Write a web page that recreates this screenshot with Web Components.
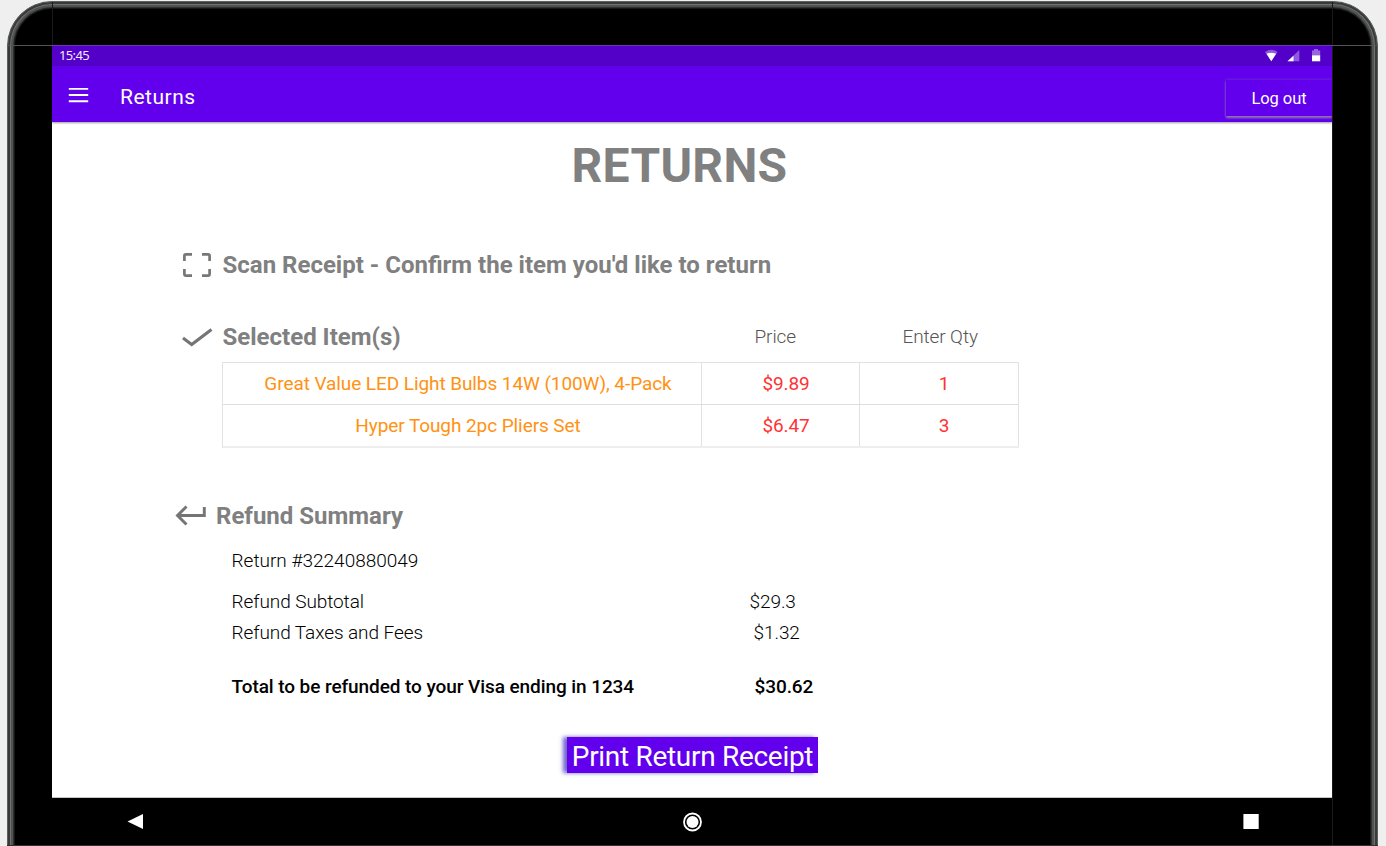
<!DOCTYPE html>
<html lang="en">
<head>
<meta charset="utf-8">
<title>Returns</title>
<style>
html,body{margin:0;height:100%;overflow:hidden;background:#efefef}
body{font-family:Roboto,"Liberation Sans",sans-serif}
</style>
</head>
<body>
<tablet-frame>
  <status-bar time="15:45"></status-bar>
  <app-bar heading="Returns"><span slot="action">Log out</span></app-bar>
  <returns-page></returns-page>
  <nav-bar></nav-bar>
</tablet-frame>
<script>
function define(name, html) {
  const t = document.createElement('template');
  t.innerHTML = html;
  customElements.define(name, class extends HTMLElement {
    connectedCallback() {
      if (this.shadowRoot) return;
      const root = this.attachShadow({mode: 'open'});
      root.append(t.content.cloneNode(true));
      root.querySelectorAll('[data-attr]').forEach(e => { e.textContent = this.getAttribute(e.dataset.attr) || ''; });
    }
  });
}

define('tablet-frame', `
<style>
:host{display:block;box-sizing:border-box;position:relative;width:1371px;height:846px;margin-left:7px;padding:45px 46px 0 45px;overflow:hidden;isolation:isolate}
.body{position:absolute;z-index:-1;left:0;right:0;top:1px;height:900px;box-sizing:border-box;border-radius:45px;background:#000;border:1px solid #5e6060;
 box-shadow:inset 0 0 0 2px #383a39,inset 0 0 0 3px #707271,inset 0 0 0 5px #505151,inset 0 0 0 6px #303030,inset 0 0 0 7px #161616}
.h{position:absolute;left:0;right:0;height:1px}
.v{position:absolute;top:2px;bottom:0;width:1px;background:#1a1a1a;z-index:-1}
.screen{width:1280px;height:801px;display:flex;flex-direction:column;background:#fff;overflow:hidden}
</style>
<div class="body"></div>
<div class="v" style="left:45px"></div><div class="v" style="right:45px"></div>
<div class="h" style="top:45px;background:#555;z-index:-1"></div>
<div class="screen"><slot></slot></div>
<div class="h" style="top:845px;background:#303030"></div>`);

define('status-bar', `
<style>
:host{display:flex;align-items:center;justify-content:space-between;box-sizing:border-box;height:21px;padding:0 8px 2px 7px;background:#5300c8;color:#f3ebff;font-size:13px;border-top:1px solid #6a35b8}
span{letter-spacing:-.65px;font-family:"Noto Sans",sans-serif}
svg{display:block}
</style>
<span data-attr="time"></span>
<svg width="64" height="19" viewBox="1260 46 64 19">
 <path d="M1265 52q6.300-4.500 12.600 0l-6.300 9.200z" fill="#fff" opacity=".35"/>
 <path d="M1266.500 53.800q4.800-2.300 9.600 0l-4.800 7.400z" fill="#fff"/>
 <path d="M1287.500 61.300L1299.300 50v11.300z" fill="#fff" opacity=".35"/>
 <path d="M1287.500 61.300L1293.500 55.800v5.500z" fill="#fff"/>
 <path d="M1312 50.500h2v-1.500h4v1.500h2.200v5H1312z" fill="#fff" opacity=".4"/>
 <path d="M1312 55.300h8.200v6H1312z" fill="#fff"/>
</svg>`);

define('app-bar', `
<style>
:host{display:flex;align-items:center;box-sizing:border-box;height:56px;padding-left:16px;background:#6200ee;color:#fff;box-shadow:0 1px 2px #0006;z-index:1;flex:none}
svg{display:block;margin-top:2px}
h1{margin:5px 0 0 31px;font:400 21px/28px Roboto,sans-serif;letter-spacing:.5px}
button{box-sizing:border-box;margin:8px 0 0 auto;width:106px;height:36px;padding:0;border:0;background:#6200ee;color:#fff;font:400 16.500px/37px Roboto,sans-serif;letter-spacing:-.05px;box-shadow:0 2px 2px #8c79aa,0 0 3px #8070a899}
</style>
<svg width="21" height="16" viewBox="0 0 21 16"><path d="M.8 1.900h19.400M.8 8h19.400M.8 14.200h19.400" stroke="#fff" stroke-width="1.900"/></svg>
<h1 data-attr="heading"></h1>
<button><slot name="action"></slot></button>`);

define('section-title', `
<style>
:host{display:flex;align-items:center;height:40px;color:#808080;font-size:24px;font-weight:700}
.icon{flex:none;width:32px;height:32px;margin:-1px 9.500px 0 0}
::slotted(svg){display:block}
</style>
<span class="icon"><slot name="icon"></slot></span><slot></slot>`);

define('item-row', `
<style>
:host{display:grid;grid-template-columns:479px 158px 159px;height:42px;box-sizing:border-box;border-bottom:1px solid #dedede;font-size:19px}
span{display:flex;align-items:center;justify-content:center;border-right:1px solid #e2e2e2;box-sizing:border-box;color:#ff3333;letter-spacing:-.1px}
.name{color:#ff9212;padding-left:12px;letter-spacing:-.08px}
.num{padding-left:11px}
.num:last-child{padding-left:10px}
</style>
<span class="name" data-attr="name"></span><span class="num" data-attr="price"></span><span class="num" data-attr="qty"></span>`);

define('summary-line', `
<style>
:host{display:flex;align-items:center;height:30px;font-size:19px;font-weight:300;color:#000;white-space:nowrap}
.l{width:var(--label,519px)}
</style>
<span class="l" data-attr="label"></span><span data-attr="value"></span>`);

define('returns-page', `
<style>
:host{display:flex;flex-direction:column;height:675px;flex:none;background:#fff;border-bottom:1px solid #c4c4c4}
h2{margin:14px 0 0;padding-right:25px;text-align:center;font:700 48px/60px Roboto,sans-serif;letter-spacing:.3px;color:#808080}
.scan{margin:49px 0 0 129px}
.selected{display:flex;margin:32px 0 0 129px}
.selected section-title{width:573.500px}
.head{font-size:19px;font-weight:300;color:#555;line-height:40px;letter-spacing:-.1px}
.qty{margin-left:106.500px}
.table{display:flex;flex-direction:column;box-sizing:border-box;width:797px;margin:5px 0 0 170px;border:1px solid #e2e2e2;border-width:1px 0 0 1px}
.table item-row:last-child{height:43px;border-bottom:2px solid #eee}
.refund{margin:48px 0 0 122.500px}
.lines{margin:9px 0 0 179.500px}
.total{font-weight:500;--label:523px;margin-top:24px;letter-spacing:-.08px}
button{display:block;margin:36px 0 0 515px;width:251px;height:36px;padding:0;border:0;background:#6200ee;color:#fff;font:400 28px/39px Roboto,sans-serif;letter-spacing:-.3px;white-space:nowrap;box-shadow:-4px 0 4px #4b3fc0cc}
</style>
<h2>RETURNS</h2>
<section-title class="scan"><svg slot="icon" width="32" height="32" viewBox="0 0 32 32" fill="none" stroke="#777" stroke-width="2.700"><path d="M3.400 12V6.900Q3.400 5.400 5 5.400H11M21 5.400h6q1.600 0 1.600 1.500V12M28.600 20v5q0 1.600-1.600 1.600H21M11 26.600H5Q3.400 26.600 3.400 25V20"/></svg>Scan Receipt - Confirm the item you'd like to return</section-title>
<div class="selected">
 <section-title><svg slot="icon" width="32" height="32" viewBox="0 0 32 32"><path d="M2 17l8.700 6.500L30.500 8.500" fill="none" stroke="#757575" stroke-width="3.100"/></svg>Selected Item(s)</section-title>
 <span class="head">Price</span><span class="head qty">Enter Qty</span>
</div>
<div class="table">
 <item-row name="Great Value LED Light Bulbs 14W (100W), 4-Pack" price="$9.89" qty="1"></item-row>
 <item-row name="Hyper Tough 2pc Pliers Set" price="$6.47" qty="3"></item-row>
</div>
<section-title class="refund"><svg slot="icon" width="32" height="32" viewBox="0 0 32 32"><path d="M29.300 7v8.500H3M11.500 6.500l-9 9L11.500 24.500" fill="none" stroke="#757575" stroke-width="2.900"/></svg>Refund Summary</section-title>
<div class="lines">
 <summary-line label="Return #32240880049"></summary-line>
 <summary-line label="Refund Subtotal" value="$29.3" style="margin-top:11px;--label:518px;letter-spacing:-.08px"></summary-line>
 <summary-line label="Refund Taxes and Fees" value="$1.32" style="margin-top:1px;--label:522px;letter-spacing:-.08px"></summary-line>
 <summary-line class="total" label="Total to be refunded to your Visa ending in 1234" value="$30.62"></summary-line>
</div>
<button>Print Return Receipt</button>`);

define('nav-bar', `
<style>
:host{display:flex;align-items:center;justify-content:space-between;flex:none;box-sizing:border-box;height:48px;padding:0 73px 0 75px;background:#000}
svg{display:block}
</style>
<svg width="16" height="16"><path d="M.5 7.500L16 0v15z" fill="#fff"/></svg>
<svg width="20" height="20"><circle cx="9.500" cy="10" r="8.500" fill="none" stroke="#fff" stroke-width="1.800"/><circle cx="9.500" cy="10" r="6" fill="#fff"/></svg>
<svg width="16" height="16"><path d="M.4 0h15.300v15H.4z" fill="#fff"/></svg>`);
</script>
</body>
</html>
